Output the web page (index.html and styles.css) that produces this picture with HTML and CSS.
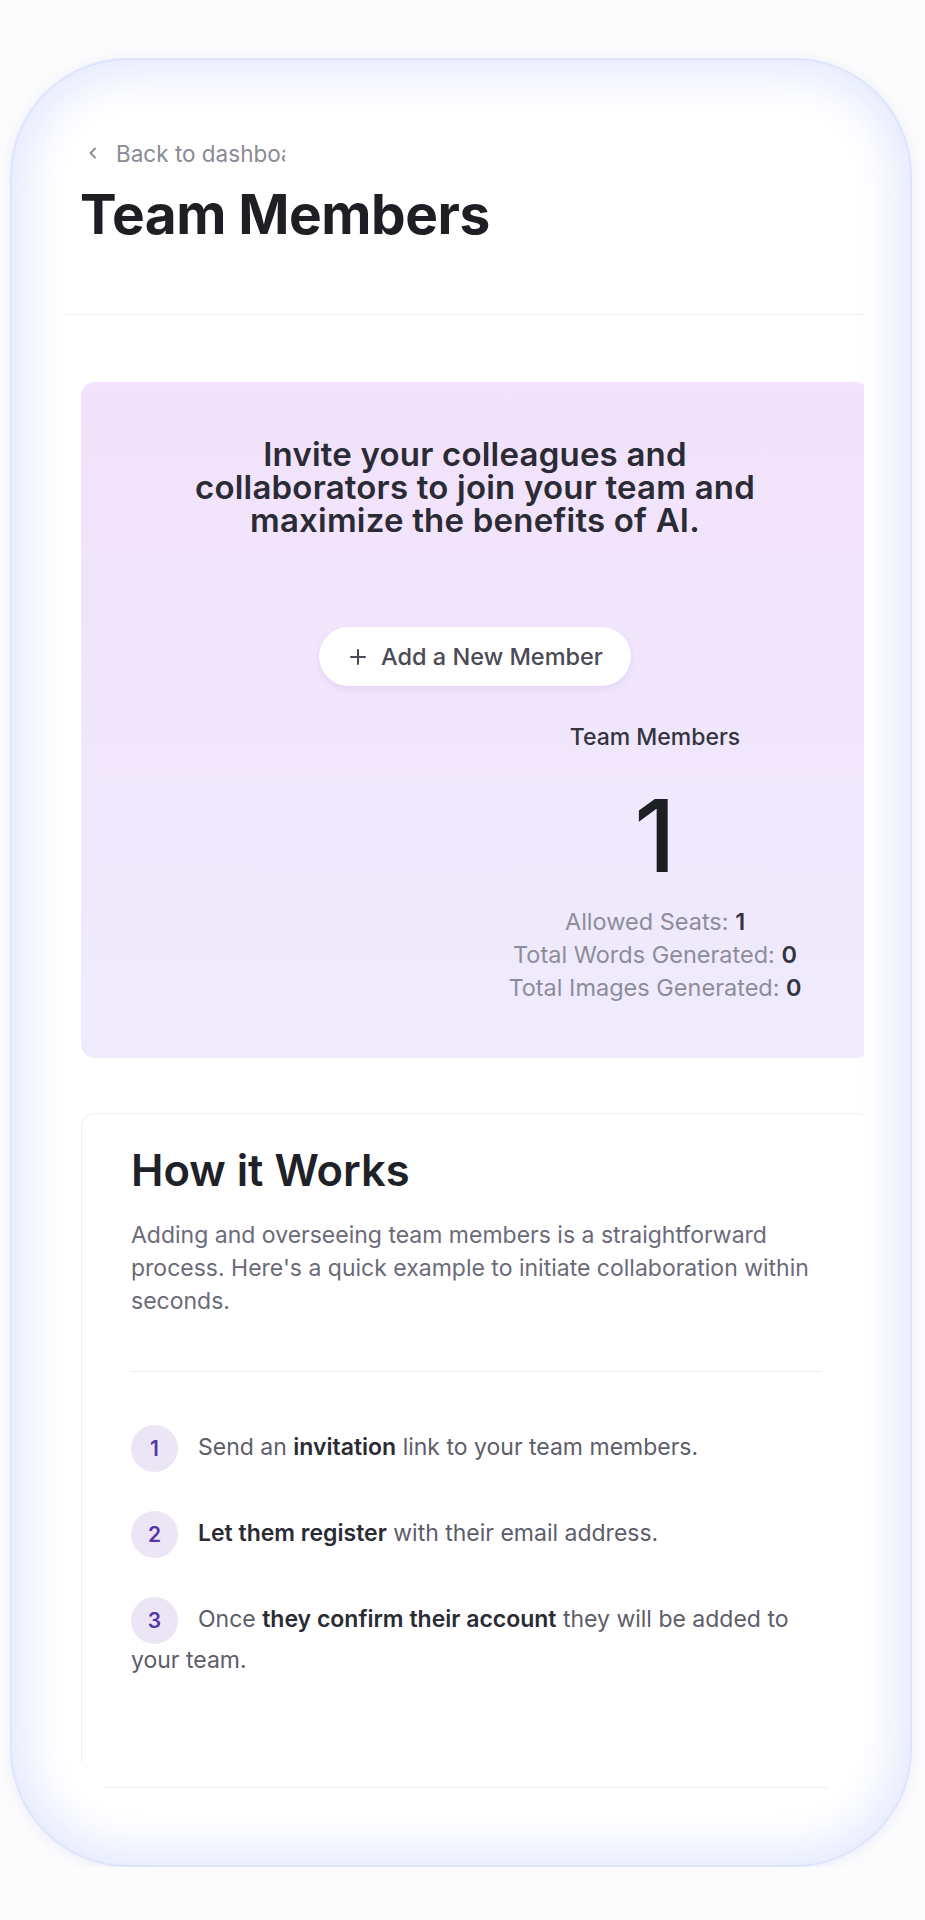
FILE: index.html
```html
<!DOCTYPE html>
<html lang="en">
<head>
  <meta charset="UTF-8" />
  <meta name="viewport" content="width=device-width, initial-scale=1.0"/>
  <title>Team Members</title>
  <link rel="stylesheet" href="styles.css">
</head>
<body>
  <div class="phone">
    <div class="screen">
      <header class="page-head">
        <a class="back-link" href="#">
          <svg width="14" height="14" viewBox="0 0 14 14" fill="none" stroke="#8a8a96" stroke-width="1.8" stroke-linecap="round" stroke-linejoin="round"><path d="M9 2.5 4.5 7 9 11.5"/></svg>
          <span>Back to dashboard</span>
        </a>
        <h1>Team Members</h1>
      </header>

      <section class="invite-card">
        <h2>Invite your colleagues and<br>collaborators to join your team and<br>maximize the benefits of AI.</h2>
        <button class="add-btn">
          <svg width="18" height="18" viewBox="0 0 18 18" fill="none" stroke="#4a4a56" stroke-width="2" stroke-linecap="round"><path d="M9 2v14M2 9h14"/></svg>
          Add a New Member
        </button>
        <div class="invite-stats">
          <div class="stats-spacer"></div>
          <div class="stats">
            <h3>Team Members</h3>
            <p class="stats-count">1</p>
            <p>Allowed Seats: <strong>1</strong></p>
            <p>Total Words Generated: <strong>0</strong></p>
            <p>Total Images Generated: <strong>0</strong></p>
          </div>
        </div>
      </section>

      <section class="how-card">
        <h2>How it Works</h2>
        <p class="how-intro">Adding and overseeing team members is a straightforward process. Here's a quick example to initiate collaboration within seconds.</p>
        <hr>
        <ol class="steps">
          <li><span class="step-num">1</span>Send an <strong>invitation</strong> link to your team members.</li>
          <li><span class="step-num">2</span><strong>Let them register</strong> with their email address.</li>
          <li><span class="step-num">3</span>Once <strong>they confirm their account</strong> they will be added to your team.</li>
        </ol>
      </section>
    </div>
    <div class="phone-foot"></div>
  </div>
</body>
</html>
```

FILE: styles.css
```css
body {
  margin: 0;
  background: #fcfcfd;
  font-family: Inter, 'Noto Sans', sans-serif;
  color: #1f2128;
}
.phone {
  box-sizing: border-box;
  width: 902px;
  height: 1809px;
  margin: 58px 0 0 10px;
  padding: 42px 48px 0 55px;
  border-radius: 118px;
  background: #fff;
  box-shadow:
    inset 0 0 0 2px #dfe5fd,
    inset 0 0 48px 14px #e2e7fe,
    0 2px 14px rgba(190, 198, 240, 0.25);
}
.screen {
  height: 1662px;
  overflow: hidden;
}
.phone-foot {
  height: 1px;
  margin: 25px 37px 0 38px;
  background: #eeeef2;
}

/* header */
.page-head {
  padding: 38px 0 70px 15px;
  border-bottom: 1px solid #f0f0f3;
}
.back-link {
  display: flex;
  align-items: center;
  gap: 16px;
  height: 30px;
  padding-left: 6px;
  color: #8a8a96;
  font-size: 22.5px;
  text-decoration: none;
}
.back-link span {
  display: block;
  width: 169px;
  overflow: hidden;
  white-space: nowrap;
}
.page-head h1 {
  margin: 16px 0 0;
  font-size: 55px;
  line-height: 60px;
  font-weight: 700;
  letter-spacing: -0.5px;
  color: #1d1f24;
}

/* invite card */
.invite-card {
  box-sizing: border-box;
  width: 788px;
  margin: 67px 0 0 16px;
  padding: 56px 34px 54px;
  border-radius: 14px;
  background: linear-gradient(180deg, #f2e2fb 0%, #efebfd 100%);
  text-align: center;
}
.invite-card h2 {
  margin: 0;
  font-size: 33px;
  line-height: 33px;
  font-weight: 600;
  letter-spacing: 0.2px;
  color: #2b2b35;
}
.add-btn {
  display: flex;
  align-items: center;
  gap: 14px;
  height: 59px;
  margin: 90px auto 0;
  padding: 0 28px 0 30px;
  border: none;
  border-radius: 30px;
  background: #fff;
  box-shadow: 0 3px 6px rgba(120, 90, 170, 0.12);
  font-family: inherit;
  font-size: 23.5px;
  font-weight: 500;
  color: #4a4a56;
  cursor: pointer;
}
.invite-stats {
  display: grid;
  grid-template-columns: 1fr 1fr;
  margin-top: 37px;
}
.stats h3 {
  margin: 0;
  font-size: 23px;
  line-height: 28px;
  font-weight: 500;
  color: #34343e;
}
.stats p {
  margin: 0;
  font-size: 23.5px;
  line-height: 33px;
  color: #8d8d99;
}
.stats strong {
  font-weight: 600;
  color: #34343e;
}
.stats .stats-count {
  margin: 35px 0 19px;
  font-size: 100px;
  line-height: 100px;
  font-weight: 500;
  color: #1d1f24;
}

/* how it works */
.how-card {
  box-sizing: border-box;
  width: 791px;
  margin: 55px 0 0 16px;
  padding: 31px 49px 140px;
  border: 1px solid #eeeef3;
  border-radius: 14px;
  background: #fff;
}
.how-card h2 {
  margin: 0;
  font-size: 43.5px;
  line-height: 50px;
  font-weight: 600;
  color: #1f2128;
}
.how-intro {
  margin: 24px 0 0;
  font-size: 23px;
  line-height: 33px;
  color: #6a6a78;
}
.how-card hr {
  margin: 53px 0 0;
  border: none;
  border-top: 1px solid #efeff3;
}
.steps {
  list-style: none;
  margin: 53px 0 0;
  padding: 0;
}
.steps li {
  margin-bottom: 39px;
  font-size: 23px;
  line-height: 33px;
  color: #5d5d6a;
}
.steps strong {
  font-weight: 600;
  color: #2b2b35;
}
.step-num {
  display: inline-flex;
  align-items: center;
  justify-content: center;
  width: 47px;
  height: 47px;
  margin-right: 20px;
  border-radius: 50%;
  background: #ebe5f6;
  color: #5536a8;
  font-size: 21px;
  font-weight: 600;
  vertical-align: middle;
}
```
